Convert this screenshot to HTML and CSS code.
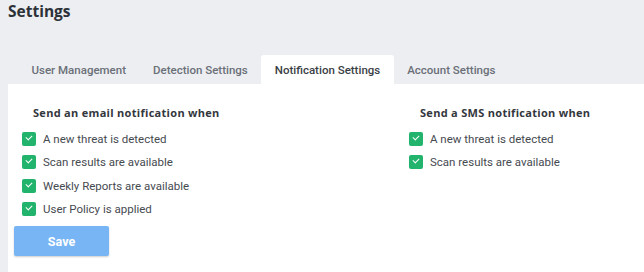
FILE: index.html
```html
<!DOCTYPE html>
<html lang="en">
<head>
    <meta charset="UTF-8">
    <meta name="viewport" content="width=device-width, initial-scale=1.0">
    <title>Settings</title>
    <link rel="stylesheet" href="styles.css">
</head>
<body>
    <h1 class="page-title">Settings</h1>

    <div class="tabs">
        <div class="tab">User Management</div>
        <div class="tab">Detection Settings</div>
        <div class="tab active">Notification Settings</div>
        <div class="tab">Account Settings</div>
    </div>

    <div class="panel">
        <div class="columns">
            <div class="group">
                <h2>Send an email notification when</h2>
                <label class="check"><span class="box"></span>A new threat is detected</label>
                <label class="check"><span class="box"></span>Scan results are available</label>
                <label class="check"><span class="box"></span>Weekly Reports are available</label>
                <label class="check"><span class="box"></span>User Policy is applied</label>
            </div>
            <div class="group">
                <h2>Send a SMS notification when</h2>
                <label class="check"><span class="box"></span>A new threat is detected</label>
                <label class="check"><span class="box"></span>Scan results are available</label>
            </div>
        </div>
        <button class="save-btn">Save</button>
    </div>
</body>
</html>
```

FILE: styles.css
```css
body {
    margin: 0;
    padding: 0 0 0 8px;
    background: #eceef1;
    font-family: Roboto, Arial, sans-serif;
    color: #3d4148;
    height: 272px;
    overflow: hidden;
    display: flex;
    flex-direction: column;
}
.page-title {
    margin: 0;
    font-family: "Open Sans", sans-serif;
    font-size: 15.5px;
    font-weight: 700;
    line-height: 22px;
    color: #2d3138;
}
.tabs {
    display: flex;
    margin: 33px 0 0 10px;
}
.tab {
    padding: 0 13.5px;
    height: 29px;
    line-height: 30px;
    font-size: 11.5px;
    font-weight: 500;
    color: #6a6f78;
    border-radius: 3px 3px 0 0;
}
.tab.active {
    background: white;
    color: #3a3e45;
}
.panel {
    flex: 1;
    background: white;
    padding: 21px 0 0 6px;
}
.columns {
    display: grid;
    grid-template-columns: 387px 230px;
    padding-left: 8px;
}
.group h2 {
    margin: 0 0 6px 11px;
    font-family: "Open Sans", sans-serif;
    font-size: 11px;
    font-weight: 700;
    letter-spacing: 0.3px;
    line-height: 16px;
    color: #33373d;
}
.check {
    display: flex;
    align-items: center;
    gap: 7px;
    height: 23.5px;
    font-size: 11.5px;
    color: #464a51;
}
.box {
    width: 14px;
    height: 14px;
    border-radius: 2px;
    background: #22b36c;
    position: relative;
}
.box::after {
    content: "";
    position: absolute;
    left: 4px;
    top: 3px;
    width: 5px;
    height: 3px;
    border-left: 1.6px solid white;
    border-bottom: 1.6px solid white;
    transform: rotate(-45deg);
}
.save-btn {
    margin-top: 5px;
    width: 95px;
    height: 30px;
    border: none;
    border-radius: 2px;
    background: #77b5f5;
    color: white;
    font-family: Roboto, Arial, sans-serif;
    font-size: 12.5px;
    font-weight: 700;
    box-shadow: 0 1px 2px rgba(0, 0, 0, 0.2);
}
```
